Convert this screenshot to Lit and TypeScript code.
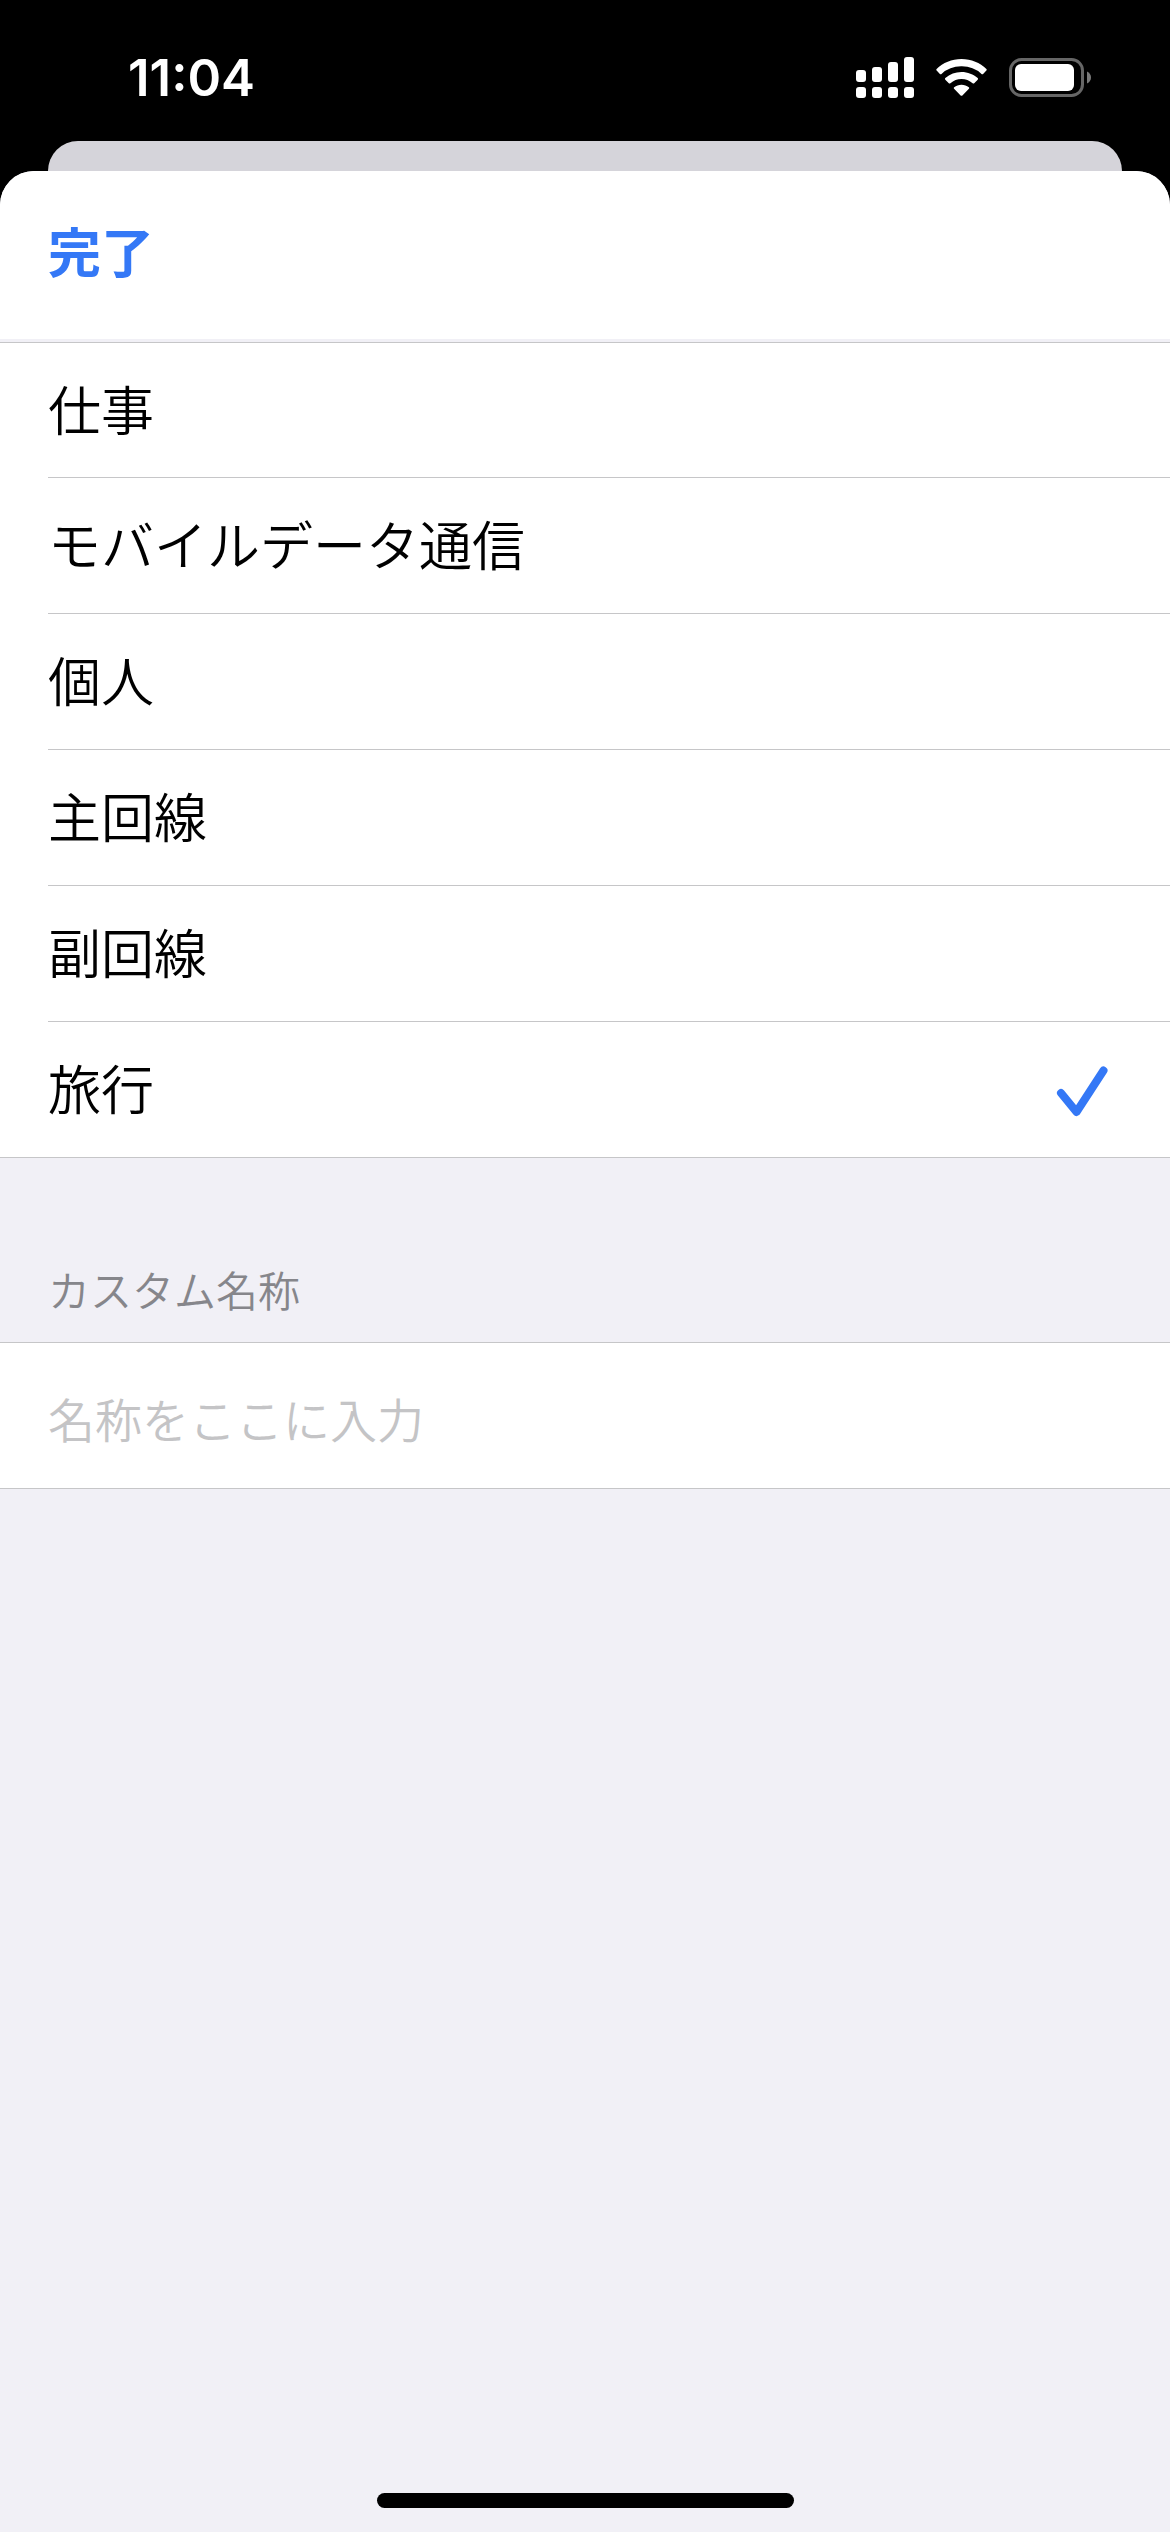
import { LitElement, html, css, svg } from "lit";
import { customElement, state } from "lit/decorators.js";

const LABELS = ["仕事", "モバイルデータ通信", "個人", "主回線", "副回線", "旅行"];

@customElement("status-bar")
class StatusBar extends LitElement {
  static styles = css`
    :host {
      display: block;
    }
    .bar {
      display: flex;
      align-items: center;
      justify-content: space-between;
      height: 141px;
      padding: 13px 78px 0 128px;
      box-sizing: border-box;
      color: #fff;
    }
    .time {
      padding-top: 2px;
      font-size: 51px;
      line-height: 60px;
      font-weight: 600;
    }
    .icons {
      display: flex;
      align-items: center;
      gap: 22px;
    }
    .icon {
      display: block;
      height: 42px;
    }
  `;

  render() {
    const columns = [
      { x: 0, top: 14 },
      { x: 16, top: 11 },
      { x: 32, top: 6 },
      { x: 48, top: 1 },
    ];
    return html`
      <div class="bar">
        <time class="time">11:04</time>
        <div class="icons">
          <svg class="icon" width="58" height="42" viewBox="0 0 58 42" fill="#fff" role="img" aria-label="電波">
            ${columns.map(
              (c) => svg`
                <rect x=${c.x} y=${c.top} width="10" height=${26 - c.top} rx="3"></rect>
                <rect x=${c.x} y="31" width="10" height="11" rx="3"></rect>`
            )}
          </svg>
          <svg class="icon" width="51" height="42" viewBox="0 0 51 42" fill="#fff" role="img" aria-label="Wi-Fi">
            <path d="M25.5 3C35.3 3 44 6.800 50.400 13c.5.500.5 1.100 0 1.600l-3.300 3.300c-.5.500-1.100.500-1.600 0A29 29 0 0 0 25.500 10.300 29 29 0 0 0 5.500 17.900c-.5.500-1.100.500-1.600 0L.6 14.600c-.5-.5-.5-1.100 0-1.600C7 6.800 15.700 3 25.500 3z"></path>
            <path d="M25.500 15.900c6.200 0 11.900 2.300 16.200 6.200.5.500.5 1.100 0 1.600l-3.500 3.500c-.5.500-1.100.400-1.600 0a16.700 16.700 0 0 0-22.200 0c-.5.400-1.100.500-1.600 0l-3.500-3.500c-.5-.5-.5-1.100 0-1.600a24.200 24.200 0 0 1 16.200-6.200z"></path>
            <path d="M25.500 28.700c2.800 0 5.300.9 7.300 2.500.5.400.5 1.100.1 1.600l-6.500 6.600c-.5.500-1.300.500-1.800 0l-6.500-6.600c-.4-.5-.4-1.200.1-1.600 2-1.600 4.500-2.500 7.300-2.500z"></path>
          </svg>
          <svg class="icon" width="83" height="42" viewBox="0 0 83 42" role="img" aria-label="バッテリー">
            <rect x="1.500" y="3.500" width="72" height="36" rx="11" fill="none" stroke="#666" stroke-width="3"></rect>
            <rect x="6" y="8" width="59" height="27" rx="6" fill="#fff"></rect>
            <path d="M78 15.500c2.500 1 4 3.400 4 6s-1.500 5-4 6z" fill="#7a7a7a"></path>
          </svg>
        </div>
      </div>
    `;
  }
}

@customElement("label-picker")
class LabelPicker extends LitElement {
  @state() private selected = "旅行";

  static styles = css`
    :host {
      display: block;
    }
    .list {
      margin: 0;
      padding: 0 0 0 48px;
      border: 0;
      border-bottom: 1px solid #c6c6c8;
      min-width: 0;
      background: #fff;
    }
    .row {
      display: flex;
      align-items: center;
      justify-content: space-between;
      height: 135px;
      padding-right: 60px;
      font-size: 53px;
      line-height: 64px;
      font-weight: 350;
      color: #000;
    }
    .row + .row {
      border-top: 1px solid #c6c6c8;
    }
    .row:first-of-type {
      height: 134px;
    }
    .name {
      padding-top: 3px;
    }
    .mark {
      display: grid;
      width: 56px;
      height: 56px;
    }
    .radio,
    .check {
      grid-area: 1 / 1;
      width: 56px;
      height: 56px;
      margin: 0;
    }
    .radio {
      appearance: none;
      outline: none;
    }
    .check {
      pointer-events: none;
    }
  `;

  render() {
    return html`
      <fieldset class="list" aria-label="名称">
        ${LABELS.map(
          (label, i) => html`
            <label class="row" for="label-${i}">
              <span class="name">${label}</span>
              <span class="mark">
                <input
                  class="radio"
                  type="radio"
                  name="label"
                  id="label-${i}"
                  .checked=${this.selected === label}
                  @change=${() => (this.selected = label)}
                />
                ${this.selected === label
                  ? html`<svg class="check" viewBox="0 0 56 56" fill="none" stroke="#3478f6" stroke-width="8" stroke-linecap="round" stroke-linejoin="round" aria-hidden="true">
                      <path d="M7 31L22.500 50L49.500 8.500"></path>
                    </svg>`
                  : null}
              </span>
            </label>
          `
        )}
      </fieldset>
    `;
  }
}

@customElement("app-root")
class AppRoot extends LitElement {
  static styles = css`
    :host {
      display: flex;
      flex-direction: column;
      min-height: 100vh;
      background: #000;
      font-family: Inter, "Noto Sans CJK JP", sans-serif;
    }
    .behind {
      height: 30px;
      margin: 0 48px;
      border-radius: 30px 30px 0 0;
      background: #d5d4da;
    }
    .sheet {
      display: flex;
      flex-direction: column;
      flex: 1;
      border-radius: 34px 34px 0 0;
      overflow: hidden;
      background: #f1f0f6;
    }
    .header {
      box-sizing: border-box;
      display: flex;
      align-items: center;
      height: 168px;
      padding: 0 48px 2px;
      background: #fff;
    }
    .rule {
      height: 3px;
      border-bottom: 1px solid #c6c6c8;
    }
    .done {
      padding: 0;
      border: 0;
      background: none;
      font: inherit;
      font-size: 53px;
      line-height: 64px;
      font-weight: 700;
      color: #3478f6;
    }
    .caption {
      padding: 104px 48px 20px;
      font-size: 42px;
      line-height: 60px;
      font-weight: 350;
      color: #86868b;
    }
    .field {
      box-sizing: border-box;
      width: 100%;
      height: 147px;
      margin: 0;
      padding: 10px 48px 0;
      border: 0;
      border-top: 1px solid #c6c6c8;
      border-bottom: 1px solid #c6c6c8;
      border-radius: 0;
      outline: none;
      background: #fff;
      font-family: inherit;
      font-size: 47px;
      font-weight: 350;
      color: #000;
    }
    .field::placeholder {
      color: #c4c4c6;
      opacity: 1;
    }
    .home {
      width: 417px;
      height: 15px;
      margin: auto auto 24px;
      border-radius: 8px;
      background: #000;
    }
  `;

  render() {
    return html`
      <status-bar></status-bar>
      <div class="behind"></div>
      <main class="sheet" lang="ja">
        <header class="header">
          <button class="done" type="button">完了</button>
        </header>
        <div class="rule"></div>
        <label-picker></label-picker>
        <label class="caption" for="custom">カスタム名称</label>
        <input class="field" id="custom" type="text" placeholder="名称をここに入力" />
        <div class="home"></div>
      </main>
    `;
  }
}
